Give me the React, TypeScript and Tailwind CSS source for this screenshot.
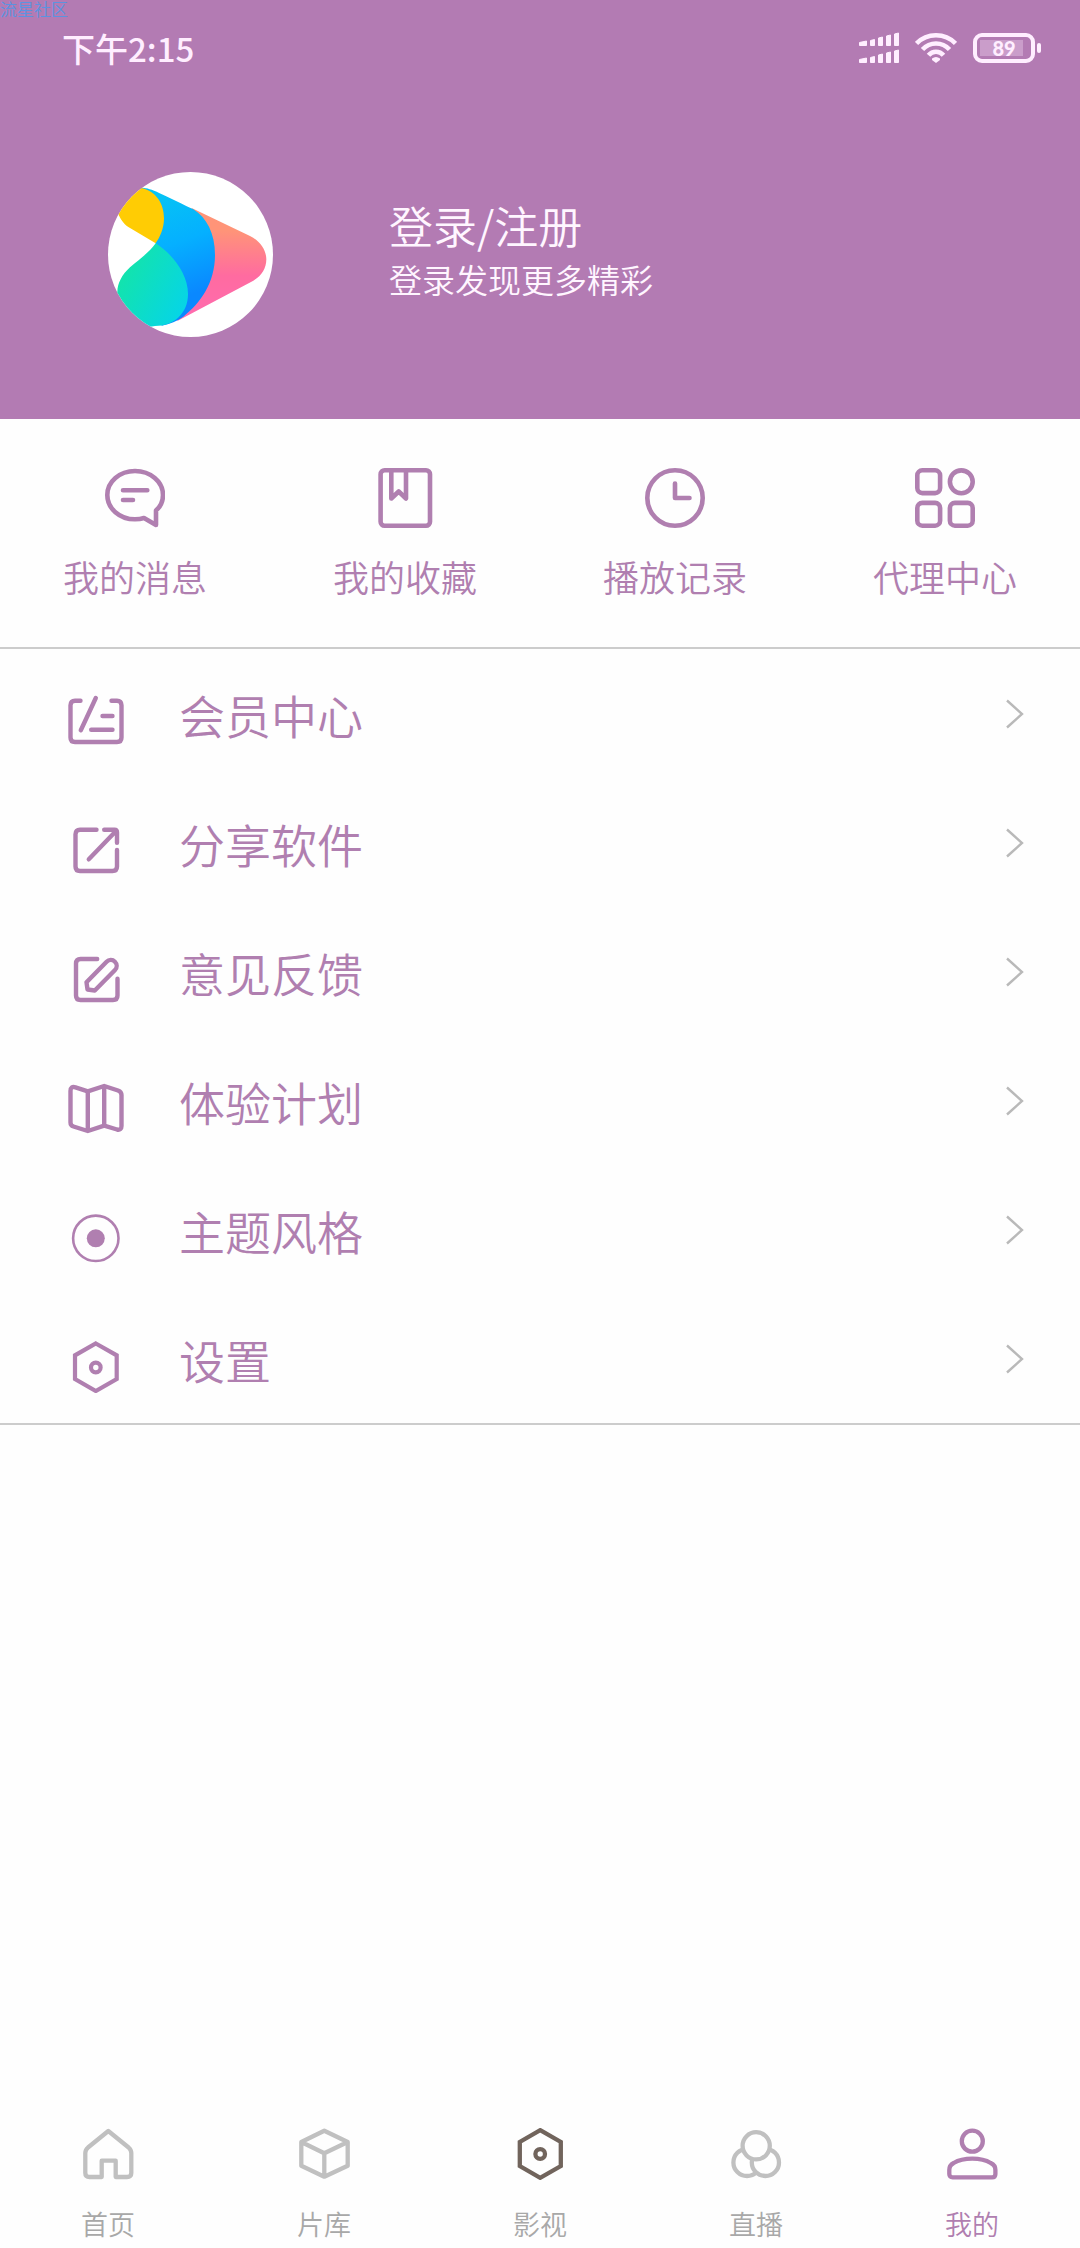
import type { ReactNode } from "react"

const MessageIcon = () => (
  <svg viewBox="0 0 60 60" className="size-[60px]" fill="none" stroke="currentColor" strokeWidth="4.6" strokeLinejoin="round" strokeLinecap="round">
    <path d="M51 42.5V57L39 50C36 51 33 51.3 30 51.3C14.6 51.3 2.3 40.4 2.3 27S14.6 3 30 3S58 13.6 58 27C58 33 55.5 38.5 51 42.5Z" />
    <path d="M18 22.3H42.3M18 32H28" />
  </svg>
)

const BookIcon = () => (
  <svg viewBox="0 0 60 60" className="size-[60px]" fill="none" stroke="currentColor" strokeWidth="4.6" strokeLinejoin="round">
    <rect x="5.6" y="2.3" width="49.4" height="55.4" rx="4" />
    <path d="M16.3 3V30.5L23.7 23.5L31 30.5V3" />
  </svg>
)

const ClockIcon = () => (
  <svg viewBox="0 0 60 60" className="size-[60px]" fill="none" stroke="currentColor" strokeWidth="4.6" strokeLinejoin="round" strokeLinecap="round">
    <circle cx="30" cy="30" r="27.7" />
    <path d="M30 15.5V30H44.5" />
  </svg>
)

const GridIcon = () => (
  <svg viewBox="0 0 60 60" className="size-[60px]" fill="none" stroke="currentColor" strokeWidth="4.6">
    <rect x="2.3" y="2.3" width="22.8" height="22.8" rx="5" />
    <circle cx="46.3" cy="13.8" r="11.4" />
    <rect x="2.3" y="34.9" width="22.8" height="22.8" rx="5" />
    <rect x="34.9" y="34.9" width="22.8" height="22.8" rx="5" />
  </svg>
)

const MemberIcon = () => (
  <svg viewBox="0 0 56 56" className="size-14" fill="none" stroke="currentColor" strokeWidth="4.4" strokeLinecap="round">
    <path d="M12.5 8.8H7Q2.5 8.8 2.5 13.3V45.5Q2.5 50 7 50H49Q53.5 50 53.5 45.5V13.3Q53.5 8.8 49 8.8H43.5" />
    <path d="M27.8 6L12.8 38.3M34.5 24H44.5M23.2 37.7H44.5" />
  </svg>
)

const ShareIcon = () => (
  <svg viewBox="0 0 56 56" className="size-14" fill="none" stroke="currentColor" strokeWidth="4.4" strokeLinecap="round" strokeLinejoin="round">
    <path d="M28.5 8.8H12Q7.5 8.8 7.5 13.3V45.5Q7.5 50 12 50H44.5Q49 50 49 45.5V29" />
    <path d="M36.2 8.8H46.5Q49 8.8 49 11.3V21.8M20.8 38.3L48 10" />
  </svg>
)

const EditIcon = () => (
  <svg viewBox="0 0 56 56" className="size-14" fill="none" stroke="currentColor" strokeWidth="4.4" strokeLinecap="round" strokeLinejoin="round">
    <path d="M29.2 9H12.5Q8 9 8 13.5V45.5Q8 50 12.5 50H45Q49.5 50 49.5 45.5V28.7" />
    <path d="M18.5 32.3L38.6 11.8A5.7 5.7 0 0 1 47 20L26.8 40.5L19.5 39.5Z" />
  </svg>
)

const MapIcon = () => (
  <svg viewBox="0 0 56 56" className="size-14" fill="none" stroke="currentColor" strokeWidth="4.4" strokeLinejoin="round">
    <path d="M2.5 12Q2.5 7 7.5 8.3L19.8 12.3L36.2 7L50 11.5Q53.5 12.8 53.5 16V47Q53.5 51.5 49 50.5L36.2 46.7L19.8 52L5.5 47.5Q2.5 46.5 2.5 43.5Z" />
    <path d="M19.8 12.3V52M36.2 7V46.7" />
  </svg>
)

const ThemeIcon = () => (
  <svg viewBox="0 0 56 56" className="size-14" fill="none" stroke="currentColor" strokeWidth="2.6">
    <circle cx="27.8" cy="30.3" r="22.7" />
    <circle cx="27.8" cy="30.3" r="9" fill="currentColor" stroke="none" />
  </svg>
)

const SettingIcon = () => (
  <svg viewBox="0 0 56 56" className="size-14" fill="none" stroke="currentColor" strokeWidth="4.2">
    <path d="M27.8 6.5L48.7 18.3V42L27.8 54L7 42V18.3Z" />
    <circle cx="27.8" cy="30.5" r="4.8" />
  </svg>
)

const HomeIcon = () => (
  <svg viewBox="0 0 52 52" className="size-[52px] text-[#c0c0c0]" fill="none" stroke="currentColor" strokeWidth="4.3" strokeLinejoin="round">
    <path d="M26.3 3L6 19.5Q3.3 22 3.3 25V45Q3.3 49 7.5 49H19.7V32.7H33.7V49H45Q49.3 49 49.3 45V25Q49.3 22 46.6 19.5Z" />
  </svg>
)

const BoxIcon = () => (
  <svg viewBox="0 0 52 52" className="size-[52px] text-[#c0c0c0]" fill="none" stroke="currentColor" strokeWidth="4.3" strokeLinejoin="round">
    <path d="M26.3 2.7L49.7 14V37.7L26.3 48.7L3.3 37.7V14ZM3.3 14L26.3 25.3L49.7 14M26.3 25.3V48.7" />
  </svg>
)

const FilmIcon = () => (
  <svg viewBox="0 0 52 52" className="size-[52px] text-[#71645c]" fill="none" stroke="currentColor" strokeWidth="4.3">
    <path d="M26.2 2.2L46.8 14V38L26.2 49.8L5.8 38V14Z" />
    <circle cx="26.2" cy="26" r="4.8" />
  </svg>
)

const LiveIcon = () => (
  <svg viewBox="0 0 52 52" className="size-[52px] text-[#c0c0c0]" fill="#fefefe" stroke="currentColor" strokeWidth="4.3">
    <circle cx="17" cy="34.4" r="13.6" />
    <circle cx="35.4" cy="34.4" r="13.6" />
    <circle cx="26.2" cy="17.8" r="13.6" />
  </svg>
)

const UserIcon = () => (
  <svg viewBox="0 0 52 52" className="size-[52px]" fill="none" stroke="currentColor" strokeWidth="4.3">
    <circle cx="26.3" cy="13.2" r="10.5" />
    <path d="M3.3 42C3.3 38 4.7 36.5 7.7 35C12.7 32 19.7 30.7 26.3 30.7S39.7 32 44.7 35C48.1 36.5 49.4 38 49.4 42V46Q49.4 49.4 46 49.4H6.7Q3.3 49.4 3.3 46Z" />
  </svg>
)

const Logo = () => (
  <svg viewBox="54 66 495 495" className="size-[165px] rounded-full bg-white">
    <defs>
      <linearGradient id="pink" x1="0" y1="0" x2="0" y2="1">
        <stop offset="0.2" stopColor="#ff9478" />
        <stop offset="0.6" stopColor="#ff6ba0" />
        <stop offset="1" stopColor="#ff6bb0" />
      </linearGradient>
      <linearGradient id="blue" x1="0.4" y1="0" x2="0.6" y2="1">
        <stop offset="0" stopColor="#06c4f4" />
        <stop offset="0.4" stopColor="#05b0ff" />
        <stop offset="0.8" stopColor="#0a88ff" />
      </linearGradient>
      <linearGradient id="green" x1="0" y1="0.2" x2="1" y2="0.8">
        <stop offset="0.1" stopColor="#14e5a6" />
        <stop offset="1" stopColor="#05d4ea" />
      </linearGradient>
    </defs>
    <path fill="url(#pink)" d="M305 174L480 258C510 273 529 300 529 328C529 355 515 378 490 392L262 513L300 300Z" />
    <path fill="url(#blue)" d="M152 113C180 113 200 124 310 178C350 203 375 250 375 315C375 400 330 460 280 500C262 513 240 522 215 527L197 280Z" />
    <path fill="#ffcc04" d="M155 114C198 124 222 160 222 205C222 235 210 262 197 280L115 231C100 222 90 205 84 190L60 120L150 90Z" />
    <path fill="url(#green)" d="M197 280C245 310 294 370 294 432C294 490 252 528 195 528L120 540L60 450L82 425C83 400 95 375 120 352C155 322 180 305 197 280Z" />
  </svg>
)

const SignalIcon = () => (
  <svg viewBox="0 0 40 32" className="h-8 w-10" fill="currentColor" stroke="currentColor" strokeWidth="1" strokeLinejoin="round">
    <path d="M.5 10.5L7.5 9V13.5H.5ZM11.5 8.5L15.5 7.5V13.5H11.5ZM19.5 6L23.5 5V13.5H19.5ZM27.5 4L31.5 3V13.5H27.5ZM35.5 2L39.5 1V13.5H35.5Z" />
    <path d="M.5 27.5L7.5 26V30.5H.5ZM11.5 25.5L15.5 24.5V30.5H11.5ZM19.5 23L23.5 22V30.5H19.5ZM27.5 21L31.5 20V30.5H27.5ZM35.5 19L39.5 18V30.5H35.5Z" />
  </svg>
)

const WifiIcon = () => (
  <svg viewBox="0 0 42 32" className="h-8 w-[42px]" fill="none" stroke="currentColor" strokeWidth="4.6">
    <path d="M1.5 11.5C12 .5 30 .5 40.5 11.5M7.5 17.5C15 9.5 27 9.5 34.5 17.5M13.5 23.3C17.5 18.5 24.5 18.5 28.5 23.3" />
    <path d="M17 26.5Q21 23.5 25 26.5V28L21 31L17 28Z" fill="currentColor" stroke="none" />
  </svg>
)

const Battery = () => (
  <div className="flex items-center gap-0.5">
    <div className="flex h-[30px] w-[62px] items-center rounded-[9px] border-4 border-current px-[3px]">
      <div className="flex h-4 w-full items-center justify-center bg-linear-to-r from-[#ca9dca] from-90% to-transparent to-90% font-['Lato',sans-serif] text-xl leading-none font-black">
        89
      </div>
    </div>
    <div className="h-[10px] w-1 rounded-full bg-current"></div>
  </div>
)

const Chevron = () => (
  <svg viewBox="0 0 18 30" className="h-[30px] w-[18px] text-[#b9b9b9]" fill="none" stroke="currentColor" strokeWidth="2.4">
    <path d="M1 1.5L16 15L1 28.5" />
  </svg>
)

type Item = { label: string; icon: ReactNode }

const shortcuts: Item[] = [
  { label: "我的消息", icon: <MessageIcon /> },
  { label: "我的收藏", icon: <BookIcon /> },
  { label: "播放记录", icon: <ClockIcon /> },
  { label: "代理中心", icon: <GridIcon /> },
]

const menu: Item[] = [
  { label: "会员中心", icon: <MemberIcon /> },
  { label: "分享软件", icon: <ShareIcon /> },
  { label: "意见反馈", icon: <EditIcon /> },
  { label: "体验计划", icon: <MapIcon /> },
  { label: "主题风格", icon: <ThemeIcon /> },
  { label: "设置", icon: <SettingIcon /> },
]

const tabs: Item[] = [
  { label: "首页", icon: <HomeIcon /> },
  { label: "片库", icon: <BoxIcon /> },
  { label: "影视", icon: <FilmIcon /> },
  { label: "直播", icon: <LiveIcon /> },
  { label: "我的", icon: <UserIcon /> },
]

const App = () => {
  return (
    <div className="flex min-h-screen flex-col bg-[#fefefe] font-['Noto_Sans_CJK_SC',sans-serif] font-[350] text-[#b07fb0]">
      <header className="relative bg-[#b37bb3] pb-[82px] text-[#ffeeff]">
        <span className="absolute top-0 left-0 text-[17px] leading-[18px] text-[#5b93e0]">流星社区</span>
        <div className="flex h-24 items-center justify-between pr-[39px] pl-[62px]">
          <span className="text-[33px] leading-none font-medium">下午2:15</span>
          <div className="flex items-center gap-4">
            <SignalIcon />
            <WifiIcon />
            <Battery />
          </div>
        </div>
        <button className="mt-[76px] ml-[108px] flex items-center gap-[116px] text-left text-[#fff6ff]">
          <Logo />
          <span className="pb-[10px]">
            <span className="block text-[44px] leading-[58px]">登录/注册</span>
            <span className="block text-[33px] leading-[50px]">登录发现更多精彩</span>
          </span>
        </button>
      </header>

      <section className="grid grid-cols-4 border-b-2 border-[#cccccc] pt-[49px] pb-[45px]">
        {shortcuts.map((item) => (
          <button key={item.label} className="flex flex-col items-center gap-[22px]">
            {item.icon}
            <span className="text-4xl leading-[52px]">{item.label}</span>
          </button>
        ))}
      </section>

      <ul className="border-b-2 border-[#cccccc]">
        {menu.map((item) => (
          <li key={item.label}>
            <button className="flex h-[129px] w-full items-center pr-14 pl-[68px] text-left">
              <span className="pt-3">{item.icon}</span>
              <span className="ml-[55px] flex-1 text-[46px] leading-[60px]">{item.label}</span>
              <Chevron />
            </button>
          </li>
        ))}
      </ul>

      <nav className="mt-auto grid grid-cols-5 pb-1 text-[#a8a8a8]">
        {tabs.map((item) => (
          <button
            key={item.label}
            className={item.label === "我的" ? "flex flex-col items-center gap-6 text-[#b07fb0]" : "flex flex-col items-center gap-6"}
          >
            {item.icon}
            <span className="text-[27px] leading-10">{item.label}</span>
          </button>
        ))}
      </nav>
    </div>
  )
}

export default App
